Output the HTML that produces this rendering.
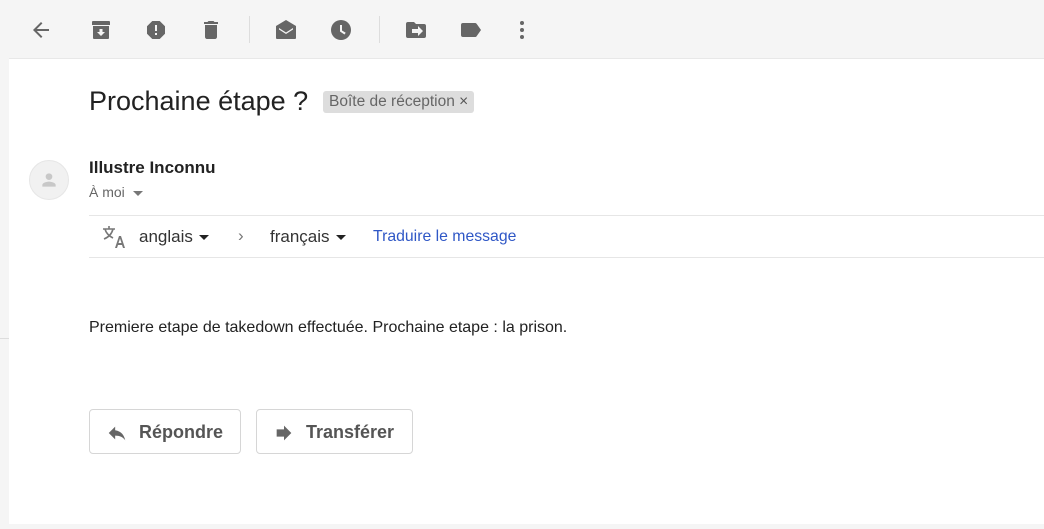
<!DOCTYPE html>
<html><head><meta charset="utf-8"><style>
*{margin:0;padding:0;box-sizing:border-box}
body{width:1044px;height:529px;background:#f5f5f5;position:relative;overflow:hidden;font-family:"Liberation Sans",Arial,sans-serif;color:#222}
.ic{position:absolute;top:18px;width:24px;height:24px}
.div{position:absolute;top:16px;width:1px;height:27px;background:#ddd}
.panel{position:absolute;left:9px;top:58px;width:1035px;height:466px;background:#fff;border-top:1px solid #e8e8e8}
.lline{position:absolute;left:0;top:338px;width:9px;height:1px;background:#ddd}
.abs{position:absolute;white-space:nowrap}
.btn{position:absolute;top:409px;height:45px;border:1px solid #d6d6d6;border-radius:4px;background:#fff;font-size:18px;color:#555;font-weight:bold}
.car{display:inline-block;width:0;height:0;border-left:5px solid transparent;border-right:5px solid transparent;border-top:5px solid #222;vertical-align:middle;margin-left:6px}
</style></head><body>
<svg class="ic" style="left:29px" viewBox="0 0 24 24"><path fill="#666" d="M20 11H7.83l5.59-5.59L12 4l-8 8 8 8 1.41-1.41L7.83 13H20v-2z"/></svg>
<svg class="ic" style="left:89px" viewBox="0 0 24 24"><path fill="#666" d="M4 3h16a1 1 0 0 1 1 1v3H3V4a1 1 0 0 1 1-1zM4 8h16v12a1 1 0 0 1-1 1H5a1 1 0 0 1-1-1zm6.5 3v3H8l4 4 4-4h-2.5v-3z"/></svg>
<svg class="ic" style="left:144px" viewBox="0 0 24 24"><path fill="#666" d="M15.7 3H8.3L3 8.3v7.4L8.3 21h7.4l5.3-5.3V8.3zM13 17h-2v-2h2zm0-4h-2V7h2z"/></svg>
<svg class="ic" style="left:199px" viewBox="0 0 24 24"><path fill="#666" d="M6 19c0 1.1.9 2 2 2h8c1.1 0 2-.9 2-2V7H6zM19 4h-3.5l-1-1h-5l-1 1H5v2h14z"/></svg>
<div class="div" style="left:249px"></div>
<svg class="ic" style="left:274px" viewBox="0 0 24 24"><path fill="#666" d="M12 2L2 8v12a1 1 0 0 0 1 1h18a1 1 0 0 0 1-1V8zM5 10l7 4.5 7-4.5v1.5l-7 4.5-7-4.5z"/></svg>
<svg class="ic" style="left:329px" viewBox="0 0 24 24"><path fill="#666" d="M12 2a10 10 0 1 0 0 20 10 10 0 0 0 0-20zm3.5 14.5L11 13.5V7h2v5.5l3.7 2.2z"/></svg>
<div class="div" style="left:379px"></div>
<svg class="ic" style="left:404px" viewBox="0 0 24 24"><path fill="#666" d="M20 6h-8l-2-2H4a2 2 0 0 0-2 2v12a2 2 0 0 0 2 2h16a2 2 0 0 0 2-2V8a2 2 0 0 0-2-2zm-6 12v-3H8v-4h6V8l5 5z"/></svg>
<svg class="ic" style="left:459px" viewBox="0 0 24 24"><path fill="#666" d="M17.6 5.8C17.3 5.3 16.6 5 16 5H4a2 2 0 0 0-2 2v10a2 2 0 0 0 2 2h12c.6 0 1.3-.3 1.6-.8L22 12z"/></svg>
<svg class="ic" style="left:510px" viewBox="0 0 24 24"><circle cx="12" cy="5" r="2" fill="#666"/><circle cx="12" cy="12" r="2" fill="#666"/><circle cx="12" cy="19" r="2" fill="#666"/></svg>
<div class="lline"></div>
<div class="panel"></div>
<div class="abs" style="left:89px;top:86px;font-size:27px;color:#222">Prochaine étape ?</div>
<div class="abs" style="left:323px;top:91px;height:22px;padding:0 6px;background:#ddd;border-radius:3px;font-size:15.5px;line-height:22px;color:#666">Boîte de réception <span style="color:#555">×</span></div>
<div class="abs" style="left:29px;top:160px;width:40px;height:40px;border-radius:50%;background:#f1f1f1;border:1px solid #e6e6e6"></div>
<svg class="abs" style="left:39px;top:170px" width="20" height="20" viewBox="0 0 24 24"><path fill="#c8c8c8" d="M12 12a4 4 0 1 0 0-8 4 4 0 0 0 0 8zm0 2c-2.7 0-8 1.3-8 4v2h16v-2c0-2.7-5.3-4-8-4z"/></svg>
<div class="abs" style="left:89px;top:158px;font-size:17px;font-weight:bold;color:#222">Illustre Inconnu</div>
<div class="abs" style="left:89px;top:184px;font-size:14px;color:#666">À moi <span class="car" style="border-top-color:#777;margin-left:4px"></span></div>
<div class="abs" style="left:89px;top:215px;width:955px;height:1px;background:#e6e6e6"></div>
<div class="abs" style="left:89px;top:257px;width:955px;height:1px;background:#e6e6e6"></div>
<svg class="abs" style="left:102px;top:225px" width="24" height="24" viewBox="0 0 24 24"><path fill="none" stroke="#777" stroke-width="1.6" d="M1 4h12M7 1v3M3 4c1 4 4 7 8 9M11 4c-1 4-4 8-9 10"/><path fill="#777" d="M17 11h2l4 12h-2l-1-3h-4l-1 3h-2zm-.5 7h3l-1.5-4.5z"/></svg>
<div class="abs" style="left:139px;top:227px;font-size:17px;color:#333">anglais<span class="car"></span></div>
<div class="abs" style="left:238px;top:226px;font-size:17px;color:#777">›</div>
<div class="abs" style="left:270px;top:227px;font-size:17px;color:#333">français<span class="car"></span></div>
<div class="abs" style="left:373px;top:228px;font-size:15.8px;color:#2f57c6">Traduire le message</div>
<div class="abs" style="left:89px;top:319px;font-size:16px;color:#222">Premiere etape de takedown effectuée. Prochaine etape : la prison.</div>
<div class="btn" style="left:89px;width:152px">
<svg class="abs" style="left:16px;top:12px" width="22" height="22" viewBox="0 0 24 24"><path fill="#666" d="M10 9V5l-7 7 7 7v-4.1c5 0 8.5 1.6 11 5.1-1-5-4-10-11-11z"/></svg>
<span class="abs" style="left:49px;top:12px">Répondre</span></div>
<div class="btn" style="left:256px;width:157px">
<svg class="abs" style="left:16px;top:12px" width="22" height="22" viewBox="0 0 24 24"><path fill="#666" d="M12 8V4l8 8-8 8v-4H4V8z"/></svg>
<span class="abs" style="left:49px;top:12px">Transférer</span></div>
</body></html>
